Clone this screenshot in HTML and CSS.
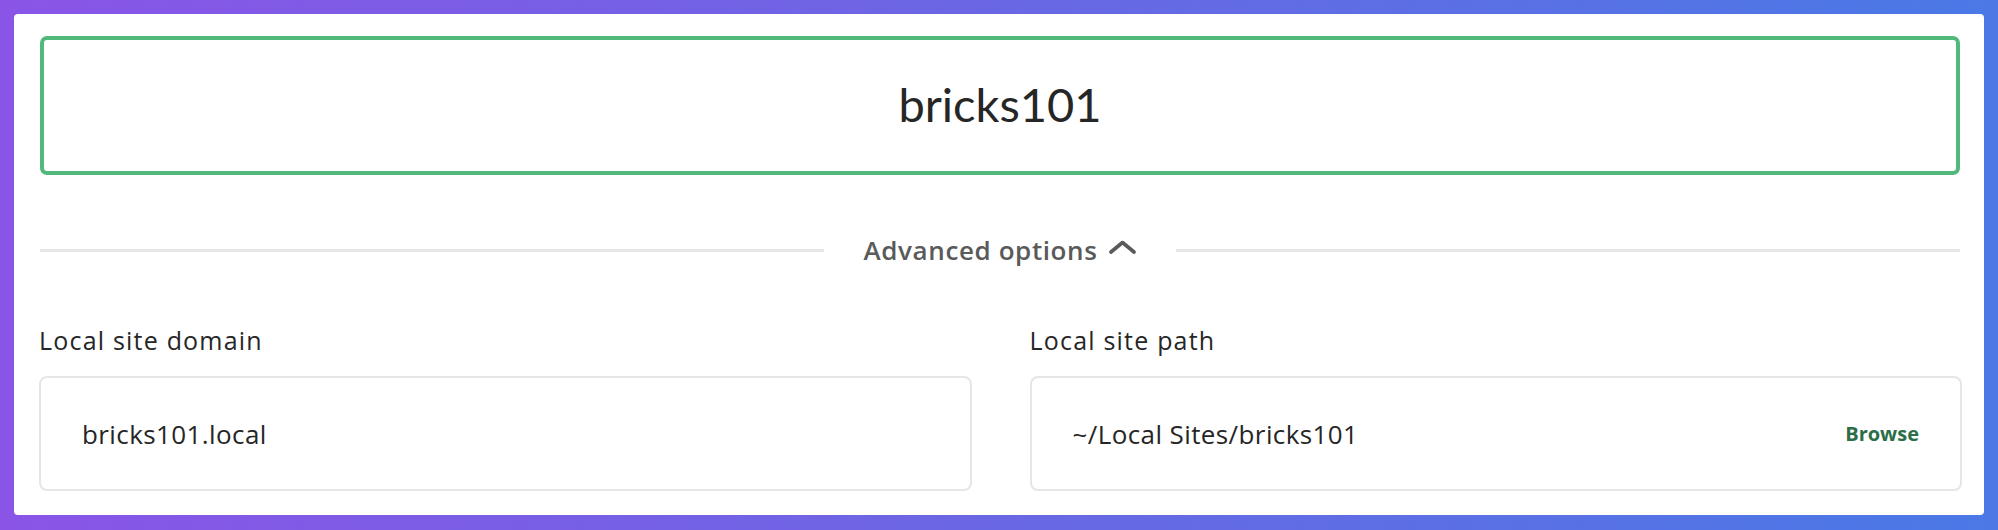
FILE: index.html
```html
<!DOCTYPE html>
<html lang="en">
<head>
<meta charset="utf-8">
<title>New site</title>
<link rel="stylesheet" href="styles.css">
</head>
<body>
<div class="frame">
  <div class="card">
    <div class="site-name">bricks101</div>
    <div class="divider">
      <span class="divider-line"></span>
      <button class="divider-toggle" type="button">Advanced options
        <svg class="chevron" width="27" height="14" viewBox="0 0 27 14" aria-hidden="true"><path d="M2 12 L13.5 2.5 L25 12" fill="none" stroke="#5a5a5a" stroke-width="3.6" stroke-linecap="round" stroke-linejoin="round"/></svg>
      </button>
      <span class="divider-line"></span>
    </div>
    <div class="fields">
      <div class="field">
        <div class="field-label">Local site domain</div>
        <div class="field-input"><span class="field-value">bricks101.local</span></div>
      </div>
      <div class="field">
        <div class="field-label">Local site path</div>
        <div class="field-input"><span class="field-value">~/Local Sites/bricks101</span><span class="browse">Browse</span></div>
      </div>
    </div>
  </div>
</div>
</body>
</html>
```
FILE: styles.css
```css
html, body {
  margin: 0;
  padding: 0;
}
body {
  font-family: "Open Sans", "Noto Sans", "Liberation Sans", sans-serif;
  color: #262626;
}
.frame {
  box-sizing: border-box;
  height: 530px;
  padding: 14px;
  background: linear-gradient(90deg, #8a55e7 0%, #6a67e4 50%, #4a79e6 100%);
}
.card {
  box-sizing: border-box;
  height: 501px;
  background: #ffffff;
  border-radius: 4px;
  padding: 22px 22px 24px 25px;
}
.site-name {
  box-sizing: border-box;
  height: 139px;
  margin: 0 2px 0 1px;
  border: 4px solid #51b97a;
  border-radius: 7px;
  display: flex;
  align-items: center;
  justify-content: center;
  font-family: Lato, "Open Sans", sans-serif;
  font-size: 47px;
  font-weight: 400;
  color: #262626;
  padding-bottom: 4px;
}
.divider {
  display: flex;
  align-items: center;
  gap: 40px;
  margin: 59px 2px 0 1px;
  height: 32px;
}
.divider-line {
  flex: 1;
  height: 3px;
  background: #e6e6e6;
}
.divider-toggle {
  display: flex;
  align-items: center;
  gap: 12px;
  border: 0;
  background: none;
  padding: 0;
  font-family: inherit;
  font-size: 26px;
  line-height: 32px;
  font-weight: 600;
  letter-spacing: 0.6px;
  color: #5a5a5a;
}
.chevron {
  margin-top: -6px;
}
.fields {
  display: grid;
  grid-template-columns: 1fr 1fr;
  column-gap: 58px;
  margin-top: 59px;
}
.field-label {
  font-size: 25px;
  line-height: 30px;
  letter-spacing: 1.2px;
  color: #262626;
  margin-bottom: 21px;
}
.field-input {
  box-sizing: border-box;
  height: 115px;
  border: 2px solid #e6e6e6;
  border-radius: 8px;
  display: flex;
  align-items: center;
  justify-content: space-between;
  padding: 0 41px 0 41px;
}
.field-value {
  font-size: 26px;
  letter-spacing: 0.4px;
  color: #262626;
}
.browse {
  font-size: 20px;
  font-weight: 700;
  color: #2b6e48;
}
```
